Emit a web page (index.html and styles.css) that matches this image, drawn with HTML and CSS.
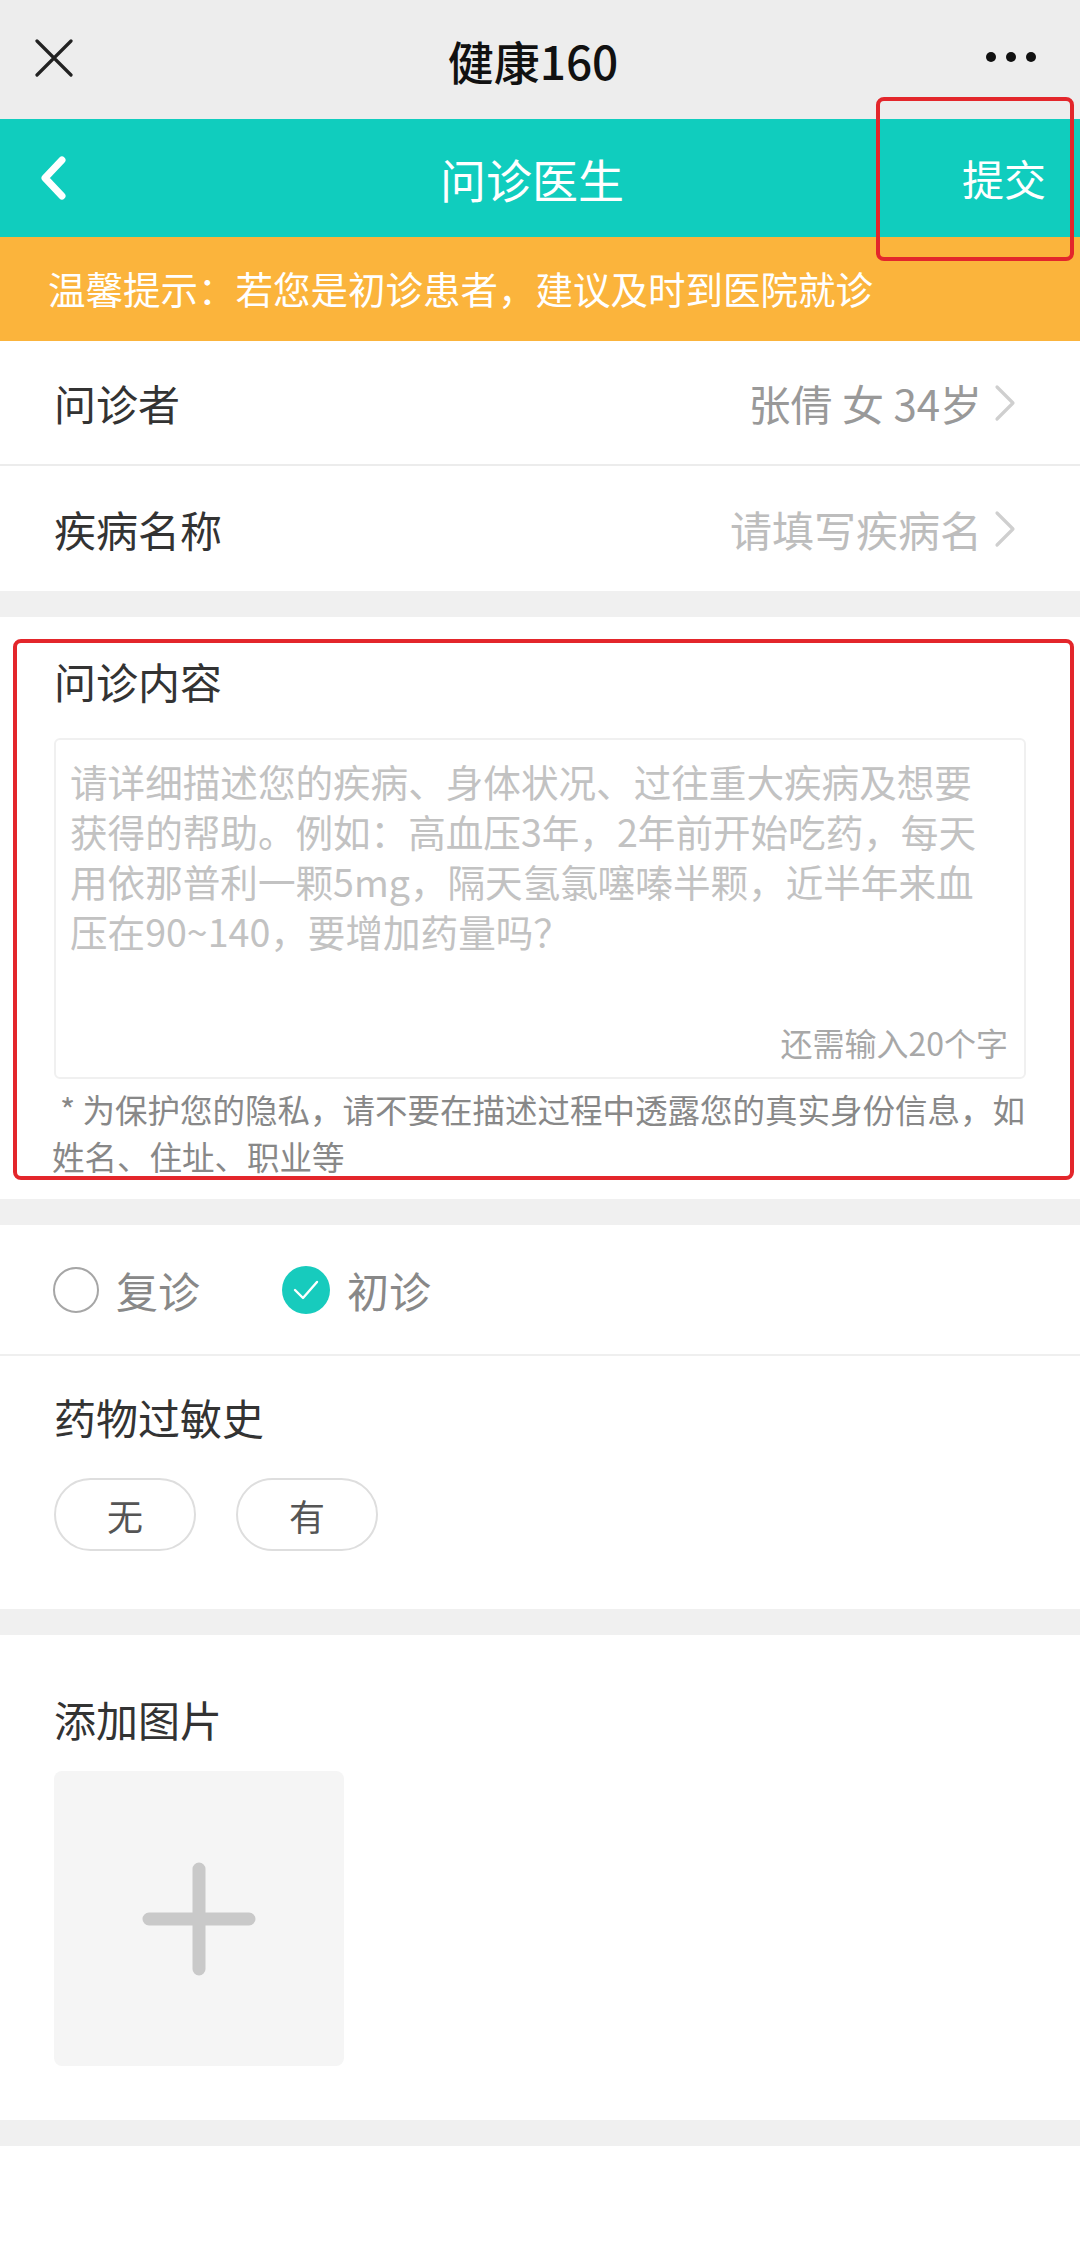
FILE: index.html
```html
<!DOCTYPE html>
<html lang="zh-CN">
<head>
<meta charset="utf-8">
<title>问诊医生</title>
<link rel="stylesheet" href="styles.css">
</head>
<body>
<div class="page">
  <header class="topbar">
    <svg class="close-icon" width="40" height="38" viewBox="0 0 40 38"><path d="M3 2 L37 36 M37 2 L3 36" stroke="#222" stroke-width="3.2" fill="none" stroke-linecap="round"/></svg>
    <div class="topbar-title">健康160</div>
    <div class="dots"><span></span><span></span><span></span></div>
  </header>

  <nav class="navbar">
    <svg class="back-icon" width="30" height="44" viewBox="0 0 30 44"><polyline points="24,4 7,22 24,40" stroke="#fff" stroke-width="7" fill="none" stroke-linecap="round" stroke-linejoin="round"/></svg>
    <div class="nav-title">问诊医生</div>
    <div class="nav-submit">提交</div>
  </nav>

  <div class="notice">温馨提示：若您是初诊患者，建议及时到医院就诊</div>

  <div class="mark mark-submit"></div>

  <section class="list">
    <div class="row">
      <span class="row-label">问诊者</span>
      <span class="row-value">张倩 女 34岁<svg class="chev" width="26" height="40" viewBox="0 0 26 40"><polyline points="5,4 21,20 5,36" stroke="#cfcfcf" stroke-width="3.2" fill="none" stroke-linecap="round" stroke-linejoin="round"/></svg></span>
    </div>
    <div class="row">
      <span class="row-label">疾病名称</span>
      <span class="row-value placeholder">请填写疾病名<svg class="chev" width="26" height="40" viewBox="0 0 26 40"><polyline points="5,4 21,20 5,36" stroke="#cfcfcf" stroke-width="3.2" fill="none" stroke-linecap="round" stroke-linejoin="round"/></svg></span>
    </div>
  </section>

  <div class="gap"></div>

  <section class="content">
    <div class="mark mark-content"></div>
    <h2 class="sec-title">问诊内容</h2>
    <div class="textarea">
      <div class="ta-placeholder">
        <span class="line">请详细描述您的疾病、身体状况、过往重大疾病及想要</span>
        <span class="line">获得的帮助。例如：高血压3年，2年前开始吃药，每天</span>
        <span class="line">用依那普利一颗5mg，隔天氢氯噻嗪半颗，近半年来血</span>
        <span class="line">压在90~140，要增加药量吗？</span>
      </div>
      <div class="ta-counter">还需输入20个字</div>
    </div>
    <p class="privacy">* 为保护您的隐私，请不要在描述过程中透露您的真实身份信息，如<br>姓名、住址、职业等</p>
  </section>

  <div class="gap"></div>

  <section class="visit">
    <div class="radio-row">
      <label class="radio">
        <span class="radio-circle"></span>
        <span class="radio-text">复诊</span>
      </label>
      <label class="radio">
        <svg class="radio-checked" width="48" height="48" viewBox="0 0 48 48"><circle cx="24" cy="24" r="24" fill="#17cbbd"/><polyline points="13,24 21,32 35,16" stroke="#fff" stroke-width="2.4" fill="none" stroke-linecap="round" stroke-linejoin="round"/></svg>
        <span class="radio-text">初诊</span>
      </label>
    </div>
    <div class="allergy">
      <h2 class="sec-title">药物过敏史</h2>
      <div class="pills">
        <span class="pill">无</span>
        <span class="pill">有</span>
      </div>
    </div>
  </section>

  <div class="gap"></div>

  <section class="images">
    <h2 class="sec-title">添加图片</h2>
    <div class="add-box">
      <svg width="116" height="116" viewBox="0 0 116 116"><path d="M58 8 V108 M8 58 H108" stroke="#c9c9c9" stroke-width="13" stroke-linecap="round" fill="none"/></svg>
    </div>
  </section>

  <div class="gap"></div>
  <div class="tail"></div>
</div>
</body>
</html>
```

FILE: styles.css
```css
* { box-sizing: border-box; }
html, body { margin: 0; padding: 0; }
body {
  background: #ffffff;
  font-family: "Noto Sans CJK SC", "Noto Sans", sans-serif;
  color: #333;
}
.page {
  position: relative;
  width: 1080px;
  min-height: 2250px;
  background: #fff;
}

/* top bar */
.topbar {
  height: 119px;
  background: #ededed;
  display: flex;
  align-items: center;
  justify-content: space-between;
  padding: 0 44px 0 34px;
  position: relative;
}
.close-icon { display: block; margin-top: -4px; }
.topbar-title {
  position: absolute;
  left: 0; right: 0;
  text-align: center;
  font-size: 46px;
  line-height: 60px;
  font-weight: 500;
  color: #111;
  margin-left: -14px;
  pointer-events: none;
}
.dots { display: flex; gap: 10px; margin-top: -6px; }
.dots span {
  width: 10px; height: 10px;
  border-radius: 50%;
  background: #111;
}

/* nav */
.navbar {
  height: 118px;
  background: #10cdbe;
  display: flex;
  align-items: center;
  justify-content: space-between;
  padding: 0 34px 0 38px;
  position: relative;
}
.back-icon { display: block; }
.nav-title {
  position: absolute;
  left: 0; right: 0;
  text-align: center;
  font-size: 46px;
  line-height: 60px;
  color: #fff;
  margin-left: -16px;
  pointer-events: none;
}
.nav-submit {
  font-size: 42px;
  line-height: 60px;
  color: #fff;
}

/* notice */
.notice {
  height: 106px;
  background: #fbb43c;
  color: #fff;
  font-size: 37.5px;
  line-height: 106px;
  padding-left: 48px;
  margin-top: -2px;
}

/* red highlight marks */
.mark {
  position: absolute;
  border: 4px solid #e3262b;
  border-radius: 8px;
  pointer-events: none;
}
.mark-submit {
  top: 97px;
  left: 876px;
  width: 198px;
  height: 164px;
}
.mark-content {
  top: 22px;
  left: 13px;
  width: 1061px;
  height: 541px;
}

/* list */
.list { background: #fff; }
.row {
  height: 125px;
  display: flex;
  align-items: center;
  justify-content: space-between;
  padding: 0 62px 0 54px;
  border-bottom: 2px solid #ececec;
  font-size: 42px;
}
.row:last-child { border-bottom: none; }
.row-label { color: #333; line-height: 60px; }
.row-value {
  display: flex;
  align-items: center;
  color: #999;
  line-height: 60px;
}
.row-value.placeholder { color: #bdbdbd; }
.chev { display: block; margin-left: 10px; }

.gap {
  height: 26px;
  background: #f0f0f0;
}

/* content */
.content {
  position: relative;
  padding: 34px 54px 20px 54px;
}
.sec-title {
  margin: 0;
  font-size: 42px;
  line-height: 60px;
  font-weight: 400;
  color: #333;
}
.textarea {
  margin-top: 27px;
  height: 341px;
  border: 2px solid #f0f0f0;
  border-radius: 6px;
  padding: 16px 14px 14px 14px;
  display: flex;
  flex-direction: column;
  justify-content: space-between;
}
.ta-placeholder {
  font-size: 37.6px;
  line-height: 50px;
  color: #c2c2c2;
  white-space: nowrap;
}
.ta-placeholder .line { display: block; }
.ta-counter {
  text-align: right;
  font-size: 32px;
  line-height: 42px;
  color: #a8a8a8;
  padding-right: 2px;
}
.privacy {
  margin: 6px 0 0 -2px;
  font-size: 32.5px;
  line-height: 47px;
  color: #888;
  white-space: nowrap;
  text-indent: 8px;
}

/* visit */
.radio-row {
  height: 131px;
  display: flex;
  align-items: center;
  padding-left: 53px;
  gap: 82px;
  border-bottom: 2px solid #efefef;
}
.radio {
  display: flex;
  align-items: center;
  gap: 17px;
}
.radio-circle {
  width: 46px; height: 46px;
  border-radius: 50%;
  border: 2.5px solid #a6a6a6;
}
.radio-checked { display: block; }
.radio-text {
  font-size: 42px;
  line-height: 60px;
  color: #888;
}
.allergy {
  padding: 31px 54px 58px 54px;
}
.pills {
  margin-top: 31px;
  display: flex;
  gap: 40px;
}
.pill {
  width: 142px;
  height: 73px;
  border: 2px solid #dedede;
  border-radius: 37px;
  display: flex;
  align-items: center;
  justify-content: center;
  font-size: 36px;
  color: #555;
}

/* images */
.images {
  padding: 54px 54px 54px 54px;
}
.add-box {
  margin-top: 22px;
  width: 290px;
  height: 295px;
  background: #f5f5f5;
  border-radius: 8px;
  display: flex;
  align-items: center;
  justify-content: center;
}
.add-box svg { display: block; }
.tail { height: 101px; background: #fff; }
```
